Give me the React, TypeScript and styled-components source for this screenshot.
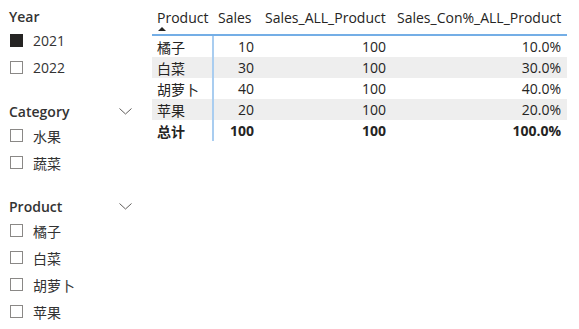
import React from 'react'
import styled, { createGlobalStyle } from 'styled-components'

const GlobalStyle = createGlobalStyle`
  body {
    margin: 0;
    background: #ffffff;
    font-family: "Open Sans", "Noto Sans CJK SC", sans-serif;
    color: #252423;
  }
`

const Page = styled.div`
  display: flex;
  align-items: flex-start;
  width: 579px;
  height: 329px;
  overflow: hidden;
`

const SlicerColumn = styled.div`
  width: 144px;
  box-sizing: border-box;
  padding: 5px 0 0 9px;
  display: flex;
  flex-direction: column;
  gap: 19px;
`

const Slicer = styled.div`
  display: flex;
  flex-direction: column;
`

const SlicerHeader = styled.div`
  height: 22px;
  display: flex;
  align-items: center;
  justify-content: space-between;
  padding-right: 12px;
  font-size: 14px;
  font-weight: 600;
  color: #333333;
`

const SlicerItem = styled.div`
  height: 27px;
  display: flex;
  align-items: center;
  gap: 10px;
  font-size: 14px;
  color: #333333;
`

const Box = styled.span<{ $checked?: boolean }>`
  width: 13px;
  height: 13px;
  box-sizing: border-box;
  margin-left: 1px;
  border: 1px solid ${p => (p.$checked ? '#252423' : '#8a8886')};
  background: ${p => (p.$checked ? '#252423' : '#ffffff')};
`

const Chevron = () => (
  <svg width="13" height="7" viewBox="0 0 13 7">
    <path d="M0.5 0.5 L6.5 6 L12.5 0.5" fill="none" stroke="#605e5c" strokeWidth="1" />
  </svg>
)

const TableWrap = styled.div`
  margin: 8px 0 0 8px;
`

const Table = styled.table`
  border-collapse: collapse;
  table-layout: fixed;
  width: 415px;
  font-size: 14px;
  color: #252423;
`

const HeadCell = styled.th<{ $w: number }>`
  width: ${p => p.$w}px;
  box-sizing: border-box;
  height: 27px;
  padding: 0 6px 0 5px;
  font-weight: 400;
  text-align: left;
  vertical-align: top;
  line-height: 19px;
  border-bottom: 2px solid #74aee6;
  position: relative;
  white-space: nowrap;
`

const SortArrow = styled.span`
  position: absolute;
  left: 6px;
  top: 19px;
  width: 0;
  height: 0;
  border-left: 4px solid transparent;
  border-right: 4px solid transparent;
  border-bottom: 4px solid #252423;
`

const Row = styled.tr<{ $shade?: boolean; $total?: boolean }>`
  background: ${p => (p.$shade ? '#eeeeee' : 'transparent')};
  font-weight: ${p => (p.$total ? 700 : 400)};
`

const Cell = styled.td<{ $num?: boolean; $split?: boolean }>`
  height: 21px;
  padding: 0 6px 0 5px;
  text-align: ${p => (p.$num ? 'right' : 'left')};
  white-space: nowrap;
  border-right: ${p => (p.$split ? '2px solid #a9cdf0' : 'none')};
`

const years = [
  { label: '2021', checked: true },
  { label: '2022', checked: false },
]
const categories = ['水果', '蔬菜']
const products = ['橘子', '白菜', '胡萝卜', '苹果']

const rows = [
  { name: '橘子', sales: 10, all: 100, pct: '10.0%' },
  { name: '白菜', sales: 30, all: 100, pct: '30.0%' },
  { name: '胡萝卜', sales: 40, all: 100, pct: '40.0%' },
  { name: '苹果', sales: 20, all: 100, pct: '20.0%' },
]

export default function App() {
  return (
    <Page>
      <GlobalStyle />
      <SlicerColumn>
        <Slicer>
          <SlicerHeader>Year</SlicerHeader>
          {years.map(y => (
            <SlicerItem key={y.label}>
              <Box $checked={y.checked} />
              {y.label}
            </SlicerItem>
          ))}
        </Slicer>
        <Slicer>
          <SlicerHeader>
            Category
            <Chevron />
          </SlicerHeader>
          {categories.map(c => (
            <SlicerItem key={c}>
              <Box />
              {c}
            </SlicerItem>
          ))}
        </Slicer>
        <Slicer>
          <SlicerHeader>
            Product
            <Chevron />
          </SlicerHeader>
          {products.map(c => (
            <SlicerItem key={c}>
              <Box />
              {c}
            </SlicerItem>
          ))}
        </Slicer>
      </SlicerColumn>
      <TableWrap>
        <Table>
          <thead>
            <tr>
              <HeadCell $w={61}>
                Product
                <SortArrow />
              </HeadCell>
              <HeadCell $w={47}>Sales</HeadCell>
              <HeadCell $w={132}>Sales_ALL_Product</HeadCell>
              <HeadCell $w={175}>Sales_Con%_ALL_Product</HeadCell>
            </tr>
          </thead>
          <tbody>
            {rows.map((r, i) => (
              <Row key={r.name} $shade={i % 2 === 1}>
                <Cell $split>{r.name}</Cell>
                <Cell $num>{r.sales}</Cell>
                <Cell $num>{r.all}</Cell>
                <Cell $num>{r.pct}</Cell>
              </Row>
            ))}
            <Row $total>
              <Cell $split>总计</Cell>
              <Cell $num>100</Cell>
              <Cell $num>100</Cell>
              <Cell $num>100.0%</Cell>
            </Row>
          </tbody>
        </Table>
      </TableWrap>
    </Page>
  )
}
